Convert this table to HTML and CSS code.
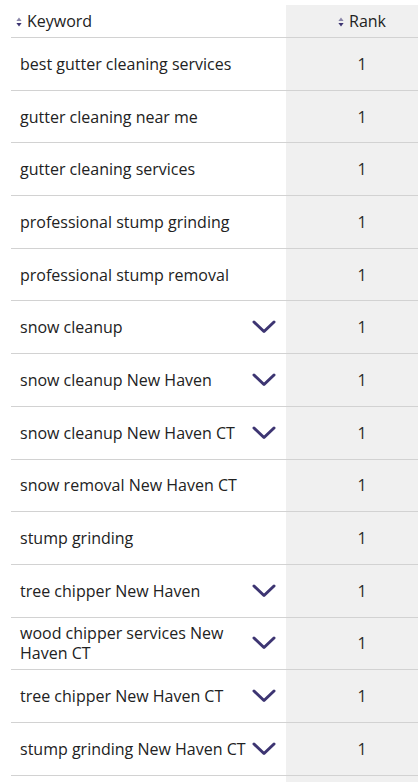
FILE: index.html
```html
<!DOCTYPE html>
<html>
<head>
<meta charset="utf-8">
<link rel="stylesheet" href="styles.css">
</head>
<body>
<div class="table">
  <div class="row head">
    <div class="kw"><span class="sort"><svg width="6" height="10" viewBox="0 0 6 10"><path d="M3 0.5 L5.6 4 H0.4Z" fill="#8a86a8"/><path d="M3 9.5 L5.6 6 H0.4Z" fill="#3d3572"/></svg></span>Keyword</div>
    <div class="rank"><span class="sort"><svg width="6" height="10" viewBox="0 0 6 10"><path d="M3 0.5 L5.6 4 H0.4Z" fill="#8a86a8"/><path d="M3 9.5 L5.6 6 H0.4Z" fill="#3d3572"/></svg></span>Rank</div>
  </div>
  <div class="row"><div class="kw"><span class="txt">best gutter cleaning services</span></div><div class="rank">1</div></div>
  <div class="row"><div class="kw"><span class="txt">gutter cleaning near me</span></div><div class="rank">1</div></div>
  <div class="row"><div class="kw"><span class="txt">gutter cleaning services</span></div><div class="rank">1</div></div>
  <div class="row"><div class="kw"><span class="txt">professional stump grinding</span></div><div class="rank">1</div></div>
  <div class="row"><div class="kw"><span class="txt">professional stump removal</span></div><div class="rank">1</div></div>
  <div class="row"><div class="kw"><span class="txt">snow cleanup</span><svg class="chev" width="24" height="14" viewBox="0 0 24 14"><path d="M2 2 L12 11.5 L22 2" fill="none" stroke="#3d3572" stroke-width="3" stroke-linecap="round" stroke-linejoin="round"/></svg></div><div class="rank">1</div></div>
  <div class="row"><div class="kw"><span class="txt">snow cleanup New Haven</span><svg class="chev" width="24" height="14" viewBox="0 0 24 14"><path d="M2 2 L12 11.5 L22 2" fill="none" stroke="#3d3572" stroke-width="3" stroke-linecap="round" stroke-linejoin="round"/></svg></div><div class="rank">1</div></div>
  <div class="row"><div class="kw"><span class="txt">snow cleanup New Haven CT</span><svg class="chev" width="24" height="14" viewBox="0 0 24 14"><path d="M2 2 L12 11.5 L22 2" fill="none" stroke="#3d3572" stroke-width="3" stroke-linecap="round" stroke-linejoin="round"/></svg></div><div class="rank">1</div></div>
  <div class="row"><div class="kw"><span class="txt">snow removal New Haven CT</span></div><div class="rank">1</div></div>
  <div class="row"><div class="kw"><span class="txt">stump grinding</span></div><div class="rank">1</div></div>
  <div class="row"><div class="kw"><span class="txt">tree chipper New Haven</span><svg class="chev" width="24" height="14" viewBox="0 0 24 14"><path d="M2 2 L12 11.5 L22 2" fill="none" stroke="#3d3572" stroke-width="3" stroke-linecap="round" stroke-linejoin="round"/></svg></div><div class="rank">1</div></div>
  <div class="row"><div class="kw"><span class="txt">wood chipper services New Haven CT</span><svg class="chev" width="24" height="14" viewBox="0 0 24 14"><path d="M2 2 L12 11.5 L22 2" fill="none" stroke="#3d3572" stroke-width="3" stroke-linecap="round" stroke-linejoin="round"/></svg></div><div class="rank">1</div></div>
  <div class="row"><div class="kw"><span class="txt">tree chipper New Haven CT</span><svg class="chev" width="24" height="14" viewBox="0 0 24 14"><path d="M2 2 L12 11.5 L22 2" fill="none" stroke="#3d3572" stroke-width="3" stroke-linecap="round" stroke-linejoin="round"/></svg></div><div class="rank">1</div></div>
  <div class="row"><div class="kw"><span class="txt">stump grinding New Haven CT</span><svg class="chev" width="24" height="14" viewBox="0 0 24 14"><path d="M2 2 L12 11.5 L22 2" fill="none" stroke="#3d3572" stroke-width="3" stroke-linecap="round" stroke-linejoin="round"/></svg></div><div class="rank">1</div></div>
  <div class="row"><div class="kw"></div><div class="rank"></div></div>
</div>
</body>
</html>
```
FILE: styles.css
```css
html, body {
  margin: 0;
  padding: 0;
  background: #fff;
  overflow: hidden;
}
body {
  font-family: "Open Sans", "Noto Sans", sans-serif;
  color: #222;
  font-size: 16px;
}
.table {
  margin: 5px 0 0 11px;
}
.row {
  display: grid;
  grid-template-columns: 275px 132px;
  height: 52.7px;
  border-bottom: 1px solid #d2d2d2;
  box-sizing: border-box;
}
.row.head {
  height: 33px;
}
.kw {
  display: flex;
  align-items: center;
  padding: 0 11px 0 9px;
  gap: 4px;
}
.txt {
  flex: 1;
  line-height: 20px;
  font-weight: 500;
}
.chev {
  flex: none;
  margin-right: -1px;
}
.rank {
  background: #f0f0f0;
  display: flex;
  align-items: center;
  justify-content: center;
  padding-left: 20px;
  color: #2a2a2a;
}
.head .kw, .head .rank {
  font-size: 16px;
  font-weight: 500;
  gap: 5px;
  color: #222;
}
.head .kw {
  padding-left: 5px;
}
.sort {
  display: inline-flex;
  align-items: center;
  margin-top: 1px;
}
```
